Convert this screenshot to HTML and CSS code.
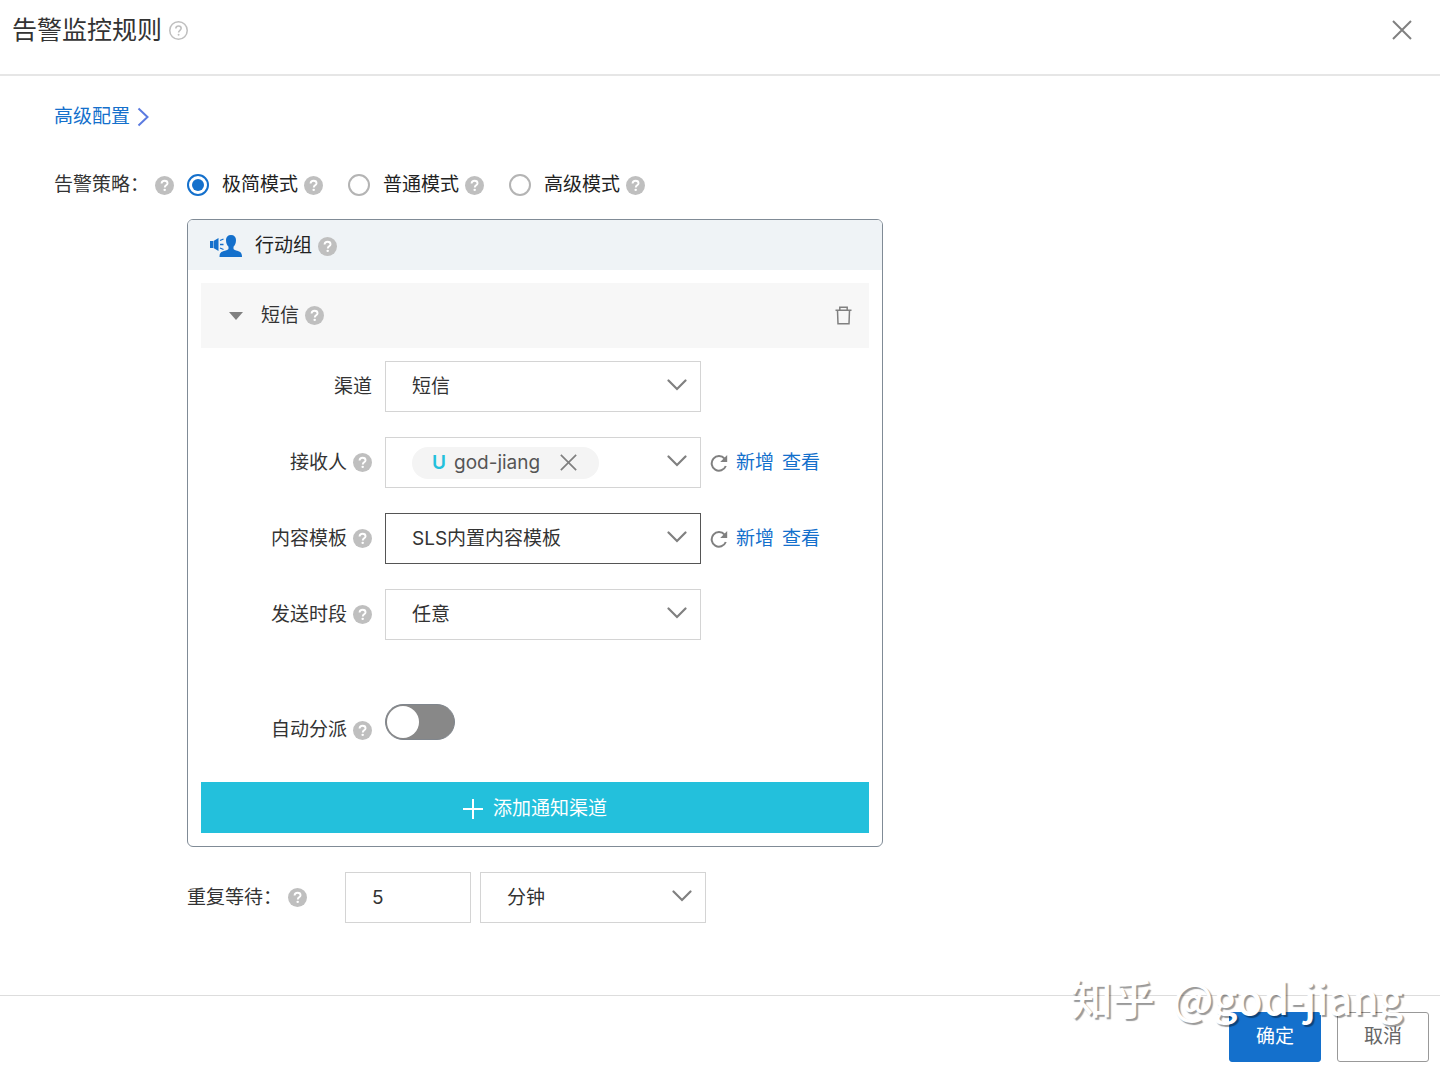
FILE: index.html
```html
<!DOCTYPE html>
<html lang="zh-CN">
<head>
<meta charset="utf-8">
<meta name="viewport" content="width=device-width, initial-scale=1">
<title>告警监控规则</title>
<link rel="stylesheet" href="styles.css">
</head>
<body>
<svg class="sprite" aria-hidden="true">
  <symbol id="help" viewBox="0 0 20 20">
    <circle cx="10" cy="10" r="10" fill="currentColor"/>
    <path d="M6.9 7.9C7 6 8.300 5 10.100 5c1.800 0 3.100 1 3.100 2.600 0 2.200-2.900 2.300-2.900 4.400" fill="none" stroke="#fff" stroke-width="2"/>
    <circle cx="10.200" cy="14.600" r="1.300" fill="#fff"/>
  </symbol>
  <symbol id="help-line" viewBox="0 0 20 20">
    <circle cx="10" cy="10" r="9.200" fill="none" stroke="currentColor" stroke-width="1.600"/>
    <path d="M7.200 8C7.200 6.200 8.400 5.200 10 5.200s2.800 1 2.800 2.500c0 2-2.700 2.300-2.700 4.400" fill="none" stroke="currentColor" stroke-width="1.700"/>
    <circle cx="10.100" cy="14.400" r="1" fill="currentColor"/>
  </symbol>
  <symbol id="chevron" viewBox="0 0 20 12">
    <path d="M1.500 1.500 10 10l8.500-8.500" fill="none" stroke="currentColor" stroke-width="2.200" stroke-linecap="round"/>
  </symbol>
  <symbol id="cross" viewBox="0 0 20 20">
    <path d="M1 1l18 18M19 1 1 19" fill="none" stroke="currentColor" stroke-width="2"/>
  </symbol>
  <symbol id="refresh" viewBox="0 0 18 18">
    <path d="M14.600 4.700A7.300 7.300 0 1 0 15.800 12" fill="none" stroke="currentColor" stroke-width="2"/>
    <path d="M17.200 1v7h-7z" fill="currentColor"/>
  </symbol>
</svg>

<div class="dialog">
  <header class="dialog-head">
    <h1 class="title">告警监控规则</h1>
    <svg class="help"><use href="#help-line"/></svg>
    <button class="icon-btn close" type="button" aria-label="关闭"><svg class="cross-lg"><use href="#cross"/></svg></button>
  </header>

  <main class="dialog-body">
    <a class="advanced" href="#">高级配置
      <svg class="arrow" viewBox="0 0 12 20"><path d="M1.500 1.500 10.500 10l-9 8.500" fill="none" stroke="currentColor" stroke-width="2"/></svg>
    </a>

    <form class="policy">
      <div class="policy-label">告警策略：<svg class="help"><use href="#help"/></svg></div>
      <div class="policy-main">
        <div class="modes">
          <div class="mode"><input class="radio" type="radio" name="mode" id="m1" checked><label class="mode-name" for="m1">极简模式</label><svg class="help"><use href="#help"/></svg></div>
          <div class="mode"><input class="radio" type="radio" name="mode" id="m2"><label class="mode-name" for="m2">普通模式</label><svg class="help"><use href="#help"/></svg></div>
          <div class="mode"><input class="radio" type="radio" name="mode" id="m3"><label class="mode-name" for="m3">高级模式</label><svg class="help"><use href="#help"/></svg></div>
        </div>

        <section class="panel">
          <div class="panel-head">
            <svg class="group-icon" viewBox="0 0 32 22" fill="#1470cc">
              <path d="M0 6h3v7H0zM3.500 6l5-3v13l-5-3z"/>
              <path d="M10 5.500 13.500 4M10 9.500h3.500M10 13l3.500 1.500" stroke="#1470cc" stroke-width="1.300"/>
              <path d="M21 0c3.200 0 5 2 5 5 0 3-1 5.400-2.500 6.800v2c0 .8 1.200 1.300 3.500 2 3.200 1 5 1.700 5 6.200H9.500c0-4.500 2-5.200 5.400-6.200 2.300-.7 3.600-1.200 3.600-2v-2C17 10.400 16 8 16 5c0-3 1.800-5 5-5z"/>
            </svg>
            <h2 class="panel-title">行动组</h2>
            <svg class="help"><use href="#help"/></svg>
          </div>

          <div class="panel-body">
            <div class="channel-head">
              <button class="icon-btn" type="button" aria-label="收起"><svg class="caret" viewBox="0 0 14 8"><path d="M0 0h14L7 8z" fill="currentColor"/></svg></button>
              <h3 class="channel-title">短信</h3>
              <svg class="help"><use href="#help"/></svg>
              <button class="icon-btn trash" type="button" aria-label="删除">
                <svg class="trash-icon" viewBox="0 0 17 19" fill="none" stroke="currentColor" stroke-width="1.500"><path d="M.5 4.200h16M4.800 4V1.200h7.400V4M2.500 4.500 3 17.700h11l.5-13.200"/></svg>
              </button>
            </div>

            <div class="fields">
              <div class="field">
                <div class="field-label"><label for="channel">渠道</label></div>
                <div class="select"><select class="control" id="channel"><option>短信</option></select><svg class="chevron"><use href="#chevron"/></svg></div>
              </div>
              <div class="field">
                <div class="field-label"><span id="receiver-label">接收人</span><svg class="help"><use href="#help"/></svg></div>
                <div class="select">
                  <div class="control tags" role="group" aria-labelledby="receiver-label">
                    <span class="tag"><b class="tag-kind">U</b><span class="tag-name">god-jiang</span><button class="icon-btn" type="button" aria-label="移除"><svg class="cross"><use href="#cross"/></svg></button></span>
                  </div>
                  <svg class="chevron"><use href="#chevron"/></svg>
                </div>
                <div class="actions"><button class="icon-btn" type="button" aria-label="刷新"><svg class="refresh"><use href="#refresh"/></svg></button><a class="link" href="#">新增</a><a class="link" href="#">查看</a></div>
              </div>
              <div class="field">
                <div class="field-label"><label for="template">内容模板</label><svg class="help"><use href="#help"/></svg></div>
                <div class="select"><select class="control active" id="template"><option>SLS内置内容模板</option></select><svg class="chevron"><use href="#chevron"/></svg></div>
                <div class="actions"><button class="icon-btn" type="button" aria-label="刷新"><svg class="refresh"><use href="#refresh"/></svg></button><a class="link" href="#">新增</a><a class="link" href="#">查看</a></div>
              </div>
              <div class="field">
                <div class="field-label"><label for="period">发送时段</label><svg class="help"><use href="#help"/></svg></div>
                <div class="select"><select class="control" id="period"><option>任意</option></select><svg class="chevron"><use href="#chevron"/></svg></div>
              </div>
            </div>

            <div class="assign">
              <div class="field-label"><label for="assign">自动分派</label><svg class="help"><use href="#help"/></svg></div>
              <input class="switch" type="checkbox" role="switch" id="assign">
            </div>

            <button class="add" type="button">
              <svg class="plus" viewBox="0 0 20 20"><path d="M10 0v20M0 10h20" stroke="currentColor" stroke-width="2"/></svg>添加通知渠道
            </button>
          </div>
        </section>

        <div class="repeat">
          <div class="repeat-label"><label for="wait">重复等待：</label><svg class="help"><use href="#help"/></svg></div>
          <input class="control amount" id="wait" type="text" value="5">
          <div class="select unit"><select class="control" aria-label="单位"><option>分钟</option></select><svg class="chevron"><use href="#chevron"/></svg></div>
        </div>
      </div>
    </form>
  </main>

  <footer class="dialog-foot">
    <button class="btn primary" type="button">确定</button>
    <button class="btn" type="button">取消</button>
    <div class="watermark"><span>知乎</span><span>@god-jiang</span></div>
  </footer>
</div>
</body>
</html>
```
FILE: styles.css
```css
* {
  box-sizing: border-box;
}

body,
h1,
h2,
h3 {
  margin: 0;
  font-weight: 400;
}

body,
button,
input,
select {
  font-family: Inter, "Noto Sans CJK SC", sans-serif;
  font-size: 19px;
  line-height: 28px;
  color: #333;
}

svg {
  display: block;
  flex: none;
}

a {
  color: #1470cc;
  text-decoration: none;
}

.sprite {
  position: absolute;
  width: 0;
  height: 0;
}

.dialog {
  display: flex;
  flex-direction: column;
  min-height: 100vh;
  background: #fff;
}

/* Header */
.dialog-head {
  display: flex;
  align-items: center;
  gap: 7px;
  padding: 12px 28px 26px 12px;
  border-bottom: 2px solid #e6e6e6;
}

.title {
  font-size: 25px;
  line-height: 36px;
}

.help {
  width: 19px;
  height: 19px;
  color: #bfbfbf;
}

.icon-btn {
  flex: none;
  padding: 0;
  border: 0;
  background: none;
  color: #808080;
  cursor: pointer;
}

.close {
  margin-left: auto;
}

.cross-lg {
  width: 20px;
  height: 20px;
}

/* Body */
.dialog-body {
  flex: 1;
  padding: 27px 54px;
}

.advanced {
  display: inline-flex;
  align-items: center;
  gap: 7px;
  margin-bottom: 40px;
}

.arrow {
  width: 12px;
  height: 20px;
  color: #5b7be0;
}

.policy {
  display: grid;
  grid-template-columns: 133px minmax(0, 1fr);
}

.policy-label,
.repeat-label,
.mode,
.modes {
  display: flex;
  align-items: center;
}

.policy-label {
  gap: 6px;
  height: 28px;
}

.modes {
  gap: 25px;
  margin-bottom: 20px;
}

.mode {
  gap: 6px;
  color: #222;
}

.radio {
  appearance: none;
  display: grid;
  place-items: center;
  width: 22px;
  height: 22px;
  margin: 0 7px 0 0;
  border: 2px solid #b4b4b4;
  border-radius: 50%;
}

.radio:checked {
  border-color: #1470cc;
}

.radio:checked::before {
  content: "";
  width: 12px;
  height: 12px;
  border-radius: 50%;
  background: #1470cc;
}

/* Action group */
.panel {
  max-width: 696px;
  border: 1px solid #808b96;
  border-radius: 6px;
  overflow: hidden;
}

.panel-head {
  display: flex;
  align-items: center;
  gap: 6px;
  height: 50px;
  padding: 2px 22px 0;
  background: #eff3f6;
  color: #222;
}

.group-icon {
  width: 32px;
  height: 22px;
  margin-right: 7px;
}

.panel-title,
.channel-title {
  font-size: 19px;
  line-height: 28px;
}

.panel-body {
  padding: 13px;
}

.channel-head {
  display: flex;
  align-items: center;
  gap: 6px;
  height: 65px;
  padding: 0 17px 0 28px;
  background: #f7f7f7;
}

.caret {
  width: 14px;
  height: 8px;
  margin-right: 12px;
}

.trash {
  margin-left: auto;
}

.trash-icon {
  width: 17px;
  height: 19px;
}

.fields {
  display: flex;
  flex-direction: column;
  gap: 25px;
  margin: 13px 0 64px;
}

.field,
.assign {
  display: flex;
  align-items: center;
}

.field-label {
  display: flex;
  flex: none;
  align-items: center;
  justify-content: flex-end;
  gap: 6px;
  width: 171px;
  margin-right: 13px;
}

.select {
  position: relative;
  flex: 0 1 316px;
}

.control {
  appearance: none;
  display: block;
  width: 100%;
  height: 51px;
  padding: 0 26px;
  border: 1px solid #d4d4d4;
  border-radius: 0;
  background: #fff;
  outline: 0;
}

.control.active {
  border-color: #555;
}

.chevron {
  position: absolute;
  top: 18px;
  right: 14px;
  width: 20px;
  height: 12px;
  color: #808080;
  pointer-events: none;
}

.tags {
  display: flex;
  align-items: center;
}

.tag {
  display: flex;
  align-items: center;
  height: 32px;
  padding: 0 22px 0 20px;
  border-radius: 16px;
  background: #f4f4f4;
  color: #555;
}

.tag-kind {
  margin-right: 8px;
  font-weight: 600;
  color: #23c0dc;
}

.tag-name {
  margin-right: 20px;
}

.cross {
  width: 17px;
  height: 17px;
}

.actions {
  display: flex;
  align-items: center;
  gap: 8px;
  margin-left: 9px;
}

.refresh {
  width: 18px;
  height: 18px;
}

.assign {
  height: 40px;
  margin-bottom: 38px;
  align-items: flex-end;
}

.switch {
  appearance: none;
  align-self: flex-start;
  width: 70px;
  height: 36px;
  margin: 0;
  padding: 1px;
  border: 1px solid #80868d;
  border-radius: 18px;
  background: #888;
}

.switch::before {
  content: "";
  display: block;
  width: 32px;
  height: 32px;
  border-radius: 50%;
  background: #fff;
}

.switch:checked::before {
  margin-left: auto;
}

.add {
  display: flex;
  align-items: center;
  justify-content: center;
  gap: 10px;
  width: 100%;
  height: 51px;
  padding: 2px 0 0;
  border: 0;
  background: #23c0dc;
  color: #fff;
}

.plus {
  width: 20px;
  height: 20px;
}

/* Repeat interval */
.repeat {
  display: flex;
  align-items: center;
  margin-top: 25px;
}

.repeat-label {
  gap: 6px;
  width: 158px;
}

.amount {
  width: 126px;
  margin-right: 9px;
}

.unit {
  flex-basis: 226px;
}

/* Footer */
.dialog-foot {
  position: relative;
  display: flex;
  justify-content: flex-end;
  gap: 16px;
  padding: 16px 11px 5px;
  border-top: 1px solid #ddd;
}

.btn {
  width: 92px;
  height: 50px;
  padding: 0;
  border: 1px solid #999;
  border-radius: 3px;
  background: #fff;
  color: #666;
}

.btn.primary {
  border-color: #1470cc;
  background: #1470cc;
  color: #fff;
}

.watermark {
  position: absolute;
  right: 37px;
  bottom: 40px;
  display: flex;
  gap: 18px;
  font-family: "Noto Sans CJK SC", sans-serif;
  font-size: 42px;
  font-weight: 500;
  line-height: 60px;
  color: #fff;
  text-shadow: 2px 2px 1px rgba(0, 0, 0, 0.4);
  white-space: nowrap;
  pointer-events: none;
}
```
